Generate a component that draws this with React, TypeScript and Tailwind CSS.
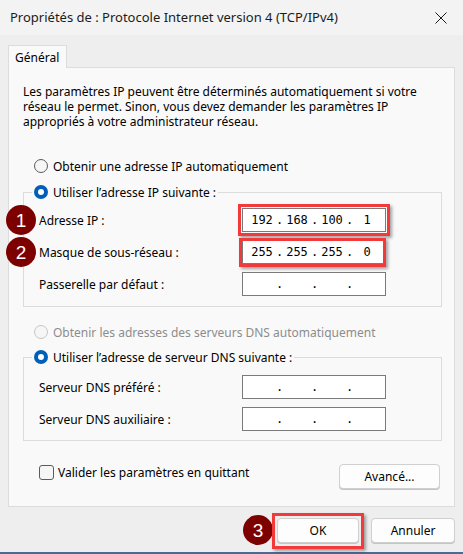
import type { ReactNode } from "react";

const dialogFont = "font-['Noto_Sans','Open_Sans',sans-serif]";

function Radio({ checked = false, disabled = false }: { checked?: boolean; disabled?: boolean }) {
  if (checked) {
    return (
      <span className="grid h-[14px] w-[14px] shrink-0 place-items-center rounded-full bg-[#005fb8]">
        <span className="h-[6px] w-[6px] rounded-full bg-white" />
      </span>
    );
  }
  return (
    <span
      className={`h-[14px] w-[14px] shrink-0 rounded-full border bg-[#f6f6f6] ${
        disabled ? "border-[#c6c6c6]" : "border-[#5c5c5c]"
      }`}
    />
  );
}

function Badge({ n, className }: { n: number; className: string }) {
  return (
    <span
      className={`absolute grid h-[30px] w-[30px] place-items-center rounded-full bg-[#7d0000] font-['Liberation_Sans',sans-serif] text-[19px] text-white ${className}`}
    >
      {n}
    </span>
  );
}

function Highlight({ className = "" }: { className?: string }) {
  return (
    <span
      className={`pointer-events-none absolute border-[3px] border-[#f23a3a] shadow-[2px_2px_3px_rgba(0,0,0,0.35)] ${className}`}
    />
  );
}

function IpField({ parts, children }: { parts?: string[]; children?: ReactNode }) {
  const p = parts ?? ["", "", "", ""];
  return (
    <div className="relative h-[24px] w-[144px]">
      {children}
      <div className="flex h-full w-full items-center border border-[#7a7a7a] bg-white pl-[5px] font-['DejaVu_Sans_Mono',monospace] text-[12px]">
        {p.map((v, i) => (
          <div key={i} className="flex items-center">
            <span className="w-[28px] text-center">{v}</span>
            {i < 3 && <span className="w-[7px] text-center">.</span>}
          </div>
        ))}
      </div>
    </div>
  );
}

function Row({ label, children, badge }: { label: string; children: ReactNode; badge?: number }) {
  return (
    <div className="relative flex h-[24px] items-center">
      {badge && <Badge n={badge} className="-left-[33px] top-[-3px]" />}
      <span className="w-[203px]">{label}</span>
      {children}
    </div>
  );
}

function Button({ children, w }: { children: ReactNode; w: string }) {
  return (
    <button
      className={`h-[25px] ${w} rounded-[4px] border border-[#d0d0d0] bg-[#fdfdfd] text-[12px] shadow-[0_1px_0_#c4c4c4]`}
    >
      {children}
    </button>
  );
}

export default function App() {
  return (
    <div className={`flex h-[554px] w-[463px] flex-col bg-[#eeeeee] text-[12px] leading-[15px] text-black ${dialogFont}`}>
      {/* title bar */}
      <div className="flex h-[35px] shrink-0 items-center justify-between bg-[#f3f3f3] pl-[10px] pr-[16px]">
        <span className="text-[13px] text-[#1b1b1b]">
          Propriétés de : Protocole Internet version 4 (TCP/IPv4)
        </span>
        <svg width="12" height="12" viewBox="0 0 12 12" fill="none" stroke="#1b1b1b" strokeWidth="1">
          <path d="M0.5 0.5 L11.5 11.5 M11.5 0.5 L0.5 11.5" />
        </svg>
      </div>

      <div className="px-[8px] pt-[10px]">
        <div className="relative z-10 -mb-px flex h-[23px] w-[59px] items-center border border-b-0 border-[#dcdcdc] bg-[#f9f9f9] pl-[6px]">
          Général
        </div>

        <div className="h-[440px] border border-[#dcdcdc] bg-[#f9f9f9] pl-[14px] pr-[12px] pt-[16px]">
          <p className="whitespace-nowrap">
            Les paramètres IP peuvent être déterminés automatiquement si votre
            <br />
            réseau le permet. Sinon, vous devez demander les paramètres IP
            <br />
            appropriés à votre administrateur réseau.
          </p>

          <label className="ml-[11px] mt-[29px] flex h-[16px] items-center gap-[5px]">
            <Radio />
            Obtenir une adresse IP automatiquement
          </label>

          <fieldset className="mt-[10px] border border-[#dcdcdc] pb-[10px] pt-[8px]">
            <legend className="ml-[8px] flex h-[16px] items-center gap-[5px] px-[2px]">
              <Radio checked />
              Utiliser l’adresse IP suivante :
            </legend>
            <div className="flex flex-col gap-[8px] pl-[15px]">
              <Row label="Adresse IP :" badge={1}>
                <IpField parts={["192", "168", "100", "1"]}>
                  <Highlight className="-bottom-[4px] -left-[4px] -right-[4px] -top-[4px]" />
                </IpField>
              </Row>
              <Row label="Masque de sous-réseau :" badge={2}>
                <IpField parts={["255", "255", "255", "0"]}>
                  <Highlight className="-bottom-[3px] -left-[3px] -right-[0px] -top-[2px]" />
                </IpField>
              </Row>
              <Row label="Passerelle par défaut :">
                <IpField />
              </Row>
            </div>
          </fieldset>

          <label className="ml-[11px] mt-[17px] flex h-[16px] items-center gap-[5px] text-[#8c8c8c]">
            <Radio disabled />
            Obtenir les adresses des serveurs DNS automatiquement
          </label>

          <fieldset className="mt-[9px] border border-[#dcdcdc] pb-[9px] pt-[10px]">
            <legend className="ml-[8px] flex h-[16px] items-center gap-[5px] px-[2px]">
              <Radio checked />
              Utiliser l’adresse de serveur DNS suivante :
            </legend>
            <div className="flex flex-col gap-[8px] pl-[15px]">
              <Row label="Serveur DNS préféré :">
                <IpField />
              </Row>
              <Row label="Serveur DNS auxiliaire :">
                <IpField />
              </Row>
            </div>
          </fieldset>

          <div className="mt-[23px] flex items-start justify-between pl-[16px] pr-[2px]">
            <label className="flex items-center gap-[4px] pt-px">
              <span className="h-[15px] w-[15px] rounded-[3px] border border-[#5c5c5c] bg-[#f6f6f6]" />
              Valider les paramètres en quittant
            </label>
            <Button w="w-[101px]">Avancé...</Button>
          </div>
        </div>
      </div>

      {/* footer buttons */}
      <div className="flex items-center justify-end gap-[12px] pr-[8px] pt-[11px]">
        <div className="relative">
          <Badge n={3} className="-left-[34px] -top-[3px]" />
          <Highlight className="-bottom-[6px] -left-[5px] -right-[5px] -top-[5px]" />
          <Button w="w-[82px]">OK</Button>
        </div>
        <Button w="w-[84px]">Annuler</Button>
      </div>

      <div className="mt-auto h-[2px] bg-[#4a6a94]" />
    </div>
  );
}
